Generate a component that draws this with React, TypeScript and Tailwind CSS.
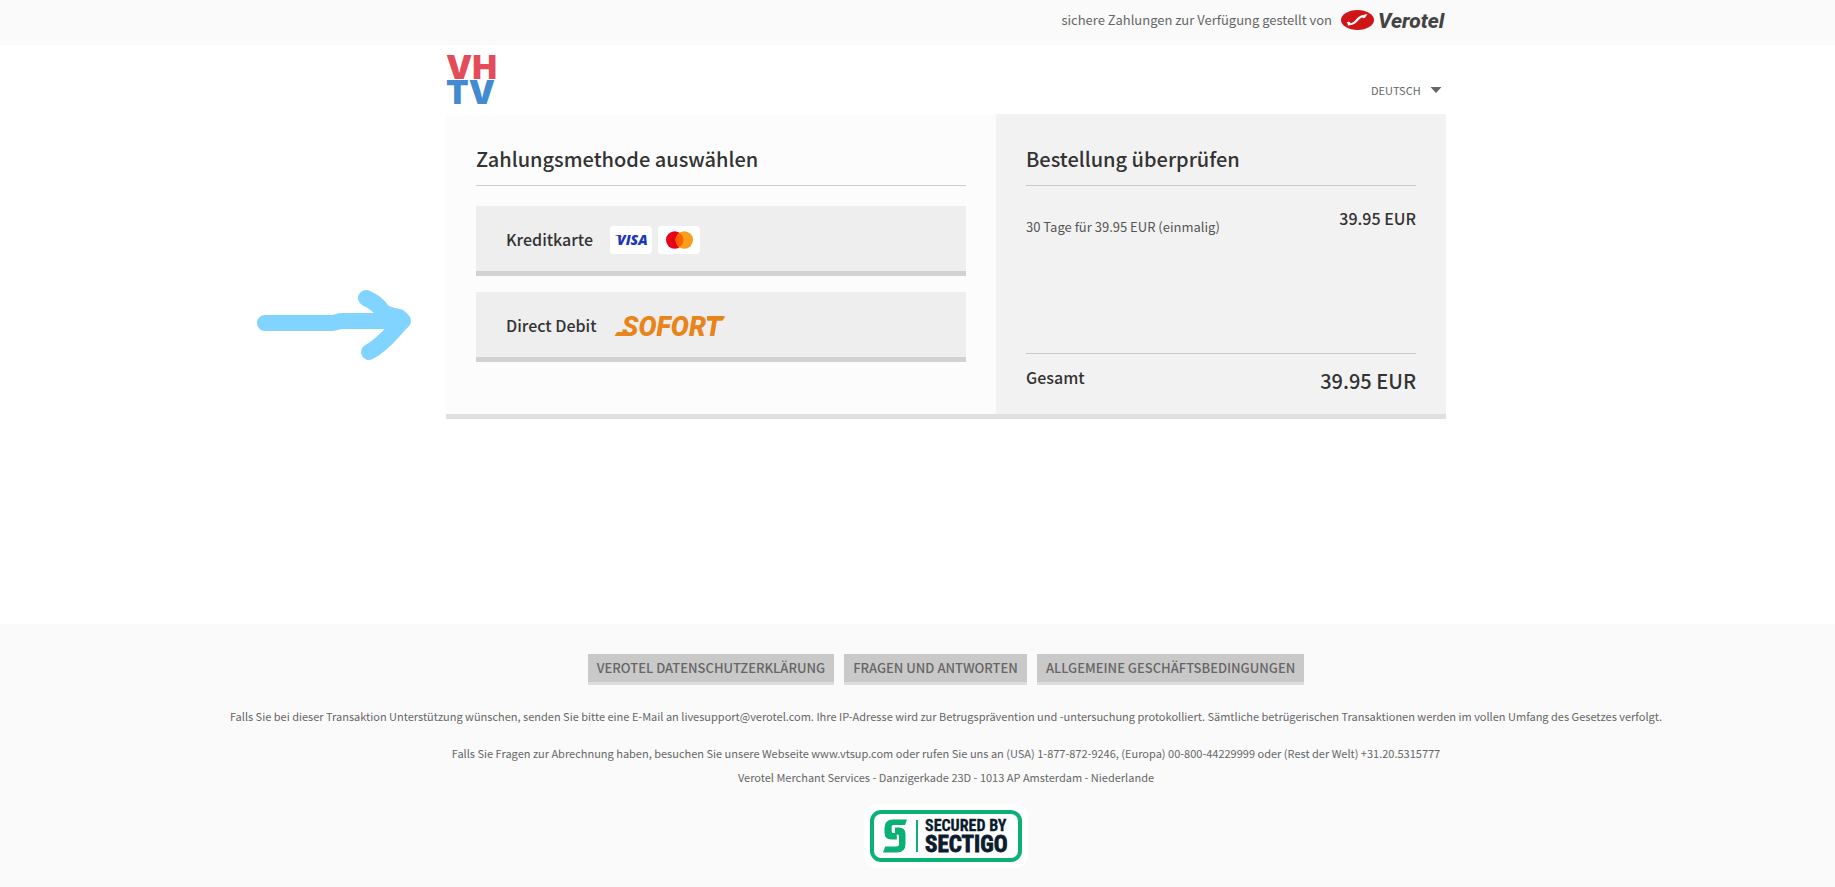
import { useState } from 'react';

const footerLinks = [
  { label: 'Verotel Datenschutzerklärung', href: '#privacy' },
  { label: 'Fragen und Antworten', href: '#faq' },
  { label: 'Allgemeine Geschäftsbedingungen', href: '#terms' },
];

const languages = ['Deutsch', 'English', 'Français', 'Español'];

function VerotelLogo() {
  return (
    <svg className="overflow-visible" width="106" height="24" viewBox="0 0 106 24" role="img" aria-label="Verotel">
      <ellipse cx="17.500" cy="12" rx="16.500" ry="10" fill="#cf1517" />
      <path
        d="M6.500 14.500c1.800-1.200 3.400-.8 4.300 1 2.600-.8 4.200-3 6.200-5.200 2.300-2.400 5.500-3.600 10.500-4.300-1.200 1.400-1.700 3.200-3 4-.9.500-1.700-.4-2.700-.5-2.600 1.300-4.200 4.200-6.800 5.900-2 1.300-4.500 2-7.300 2 .4-1.200-.1-2.200-1.200-2.900z"
        fill="#fff"
      />
      <text x="38" y="20" fontFamily="Roboto, sans-serif" fontSize="21" fontWeight="800" fontStyle="italic" fill="#444">
        Verotel
      </text>
    </svg>
  );
}

function VhtvLogo() {
  return (
    <svg
      className="overflow-visible"
      width="50"
      height="50"
      viewBox="0 0 50 50"
      role="img"
      aria-label="VHTV"
      fontFamily="Inter, sans-serif"
      fontSize="33"
      fontWeight="900"
    >
      <text x="0" y="25" fill="#e34d59">VH</text>
      <text x="0" y="50" fill="#428bd0">TV</text>
    </svg>
  );
}

function VisaCard() {
  return (
    <svg width="42" height="28" viewBox="0 0 42 28" role="img" aria-label="Visa">
      <rect width="42" height="28" rx="4" fill="#fff" />
      <path d="M5.500 9h5l1.500 2.500c-1.500-1.200-3.500-1.800-6.500-2z" fill="#1434cb" />
      <text x="7" y="19" fontFamily="'Open Sans', sans-serif" fontSize="14" fontWeight="800" fontStyle="italic" fill="#1a36c0">
        VISA
      </text>
    </svg>
  );
}

function MasterCard() {
  return (
    <svg width="42" height="28" viewBox="0 0 42 28" role="img" aria-label="Mastercard">
      <rect width="42" height="28" rx="4" fill="#fff" />
      <circle cx="16.700" cy="14" r="8.700" fill="#eb001b" />
      <circle cx="26.300" cy="14" r="8.700" fill="#f79e1b" />
      <path d="M21.500 6.740a8.700 8.700 0 0 1 0 14.520a8.700 8.700 0 0 1 0-14.520z" fill="#ff5f00" />
    </svg>
  );
}

function SofortLogo() {
  return (
    <svg className="overflow-visible" width="112" height="22" viewBox="0 0 112 22" role="img" aria-label="SOFORT">
      <path d="M3 17h12v4H0.500z" fill="#e8851a" />
      <path d="M93 1.300h18.500l-3.200 4.400h-15z" fill="#e8851a" />
      <text x="8" y="20.500" fontFamily="Roboto, sans-serif" fontSize="27" fontWeight="900" fontStyle="italic" fill="#e8851a">
        SOFORT
      </text>
    </svg>
  );
}

function SectigoSeal() {
  return (
    <svg width="164" height="64" viewBox="0 0 164 64" role="img" aria-label="Secured by Sectigo">
      <rect width="164" height="64" rx="12" fill="#fff" />
      <rect x="8" y="8" width="148" height="48" rx="9" fill="#fff" stroke="#0bb074" strokeWidth="4" />
      <g fill="#0bb074">
        <path d="M43 15.500l-2 5.500H29.500q-1.800 0-1.800 1.800V27.500q0 1.500 1.500 1.500H31v-5.500h4q6.500 0 6.500 6.500V40q0 8.500-8.500 8.500H19l2.200-6H32.500q2.500 0 2.500-2.500V32q0-1.500-1.500-1.500h-.7V35.500H27.500q-7 0-7-7V24q0-8.500 8.500-8.500z" />
        <rect x="52" y="16" width="2" height="32" />
      </g>
      <g fontFamily="'Liberation Sans Narrow', 'Roboto Condensed', Roboto, sans-serif" fontWeight="700" fill="#0b1c2c" stroke="#0b1c2c">
        <text x="61" y="27" fontSize="16" strokeWidth="0.300">SECURED BY</text>
        <text x="61" y="48" fontSize="23" strokeWidth="0.800">SECTIGO</text>
      </g>
    </svg>
  );
}

// hand-drawn pointer in the margin beside the payment methods
function Arrow() {
  return (
    <svg
      className="absolute top-[173px] -left-[190px]"
      width="160"
      height="80"
      viewBox="0 0 160 80"
      fill="none"
      stroke="#80d4ff"
      strokeWidth="16"
      strokeLinecap="round"
      strokeLinejoin="round"
      aria-hidden="true"
    >
      <path d="M9 36h66c5 0 6-2 12-2h56" />
      <path d="M110 11c8 4 13 7 17 14 5 2 8 4 16 5l4 4c-8 7-17 22-34 31" />
    </svg>
  );
}

export default function App() {
  const [language, setLanguage] = useState('Deutsch');

  return (
    <div className="flex min-h-screen flex-col bg-white font-['Noto_Sans_CJK_SC',sans-serif] text-[#666]">
      <div className="bg-[#fafafa] pl-[57px]">
        <div className="mx-auto flex h-[45px] max-w-[1000px] items-center justify-end gap-2 pb-[6px]">
          <span className="text-[13px] leading-5">sichere Zahlungen zur Verfügung gestellt von</span>
          <VerotelLogo />
        </div>
      </div>

      <div className="pl-[57px]">
        <div className="mx-auto max-w-[1000px]">
          <header className="flex items-end justify-between pt-[9px] pb-[10px]">
            <VhtvLogo />
            <div className="relative pb-[2px]">
              <select
                aria-label="Sprache"
                value={language}
                onChange={(e) => setLanguage(e.target.value)}
                className="block appearance-none pr-[23px] text-[11px] leading-6 uppercase"
              >
                {languages.map((l) => (
                  <option key={l}>{l}</option>
                ))}
              </select>
              <svg className="pointer-events-none absolute top-[9px] right-1" width="12" height="6" viewBox="0 0 12 6" aria-hidden="true">
                <path d="M0.500 0h11L6 6z" fill="#666" />
              </svg>
            </div>
          </header>

          <main className="relative flex border-b-[5px] border-[#e0e0e0] text-[#333]">
            <Arrow />
            <section className="w-[55%] bg-[#fcfcfc] px-[30px] pt-[29px] pb-[52px]">
              <h1 className="border-b border-[#ccc] pb-[11px] text-[20px] leading-[31px] font-medium">Zahlungsmethode auswählen</h1>
              <div className="mt-5 flex flex-col gap-4">
                <button className="flex h-[70px] items-center gap-[17px] border-b-[5px] border-[#d2d2d2] bg-[#eee] px-[30px]">
                  <span className="text-[16px] leading-6 font-medium">Kreditkarte</span>
                  <span className="flex gap-[6px] pt-[2px]">
                    <VisaCard />
                    <MasterCard />
                  </span>
                </button>
                <button className="flex h-[70px] items-center gap-[17px] border-b-[5px] border-[#d2d2d2] bg-[#eee] px-[30px]">
                  <span className="text-[16px] leading-6 font-medium">Direct Debit</span>
                  <span className="pt-[2px]">
                    <SofortLogo />
                  </span>
                </button>
              </div>
            </section>

            <section className="flex w-[45%] flex-col bg-[#f2f2f2] px-[30px] pt-[29px] pb-[17px]">
              <h2 className="border-b border-[#ccc] pb-[11px] text-[20px] leading-[31px] font-medium">Bestellung überprüfen</h2>
              <div className="mt-5 flex items-start justify-between">
                <p className="pt-[11px] text-[13px] leading-5 text-[#555]">30 Tage für 39.95 EUR (einmalig)</p>
                <p className="text-[16px] leading-6 font-medium">39.95 EUR</p>
              </div>
              <div className="mt-auto flex items-start justify-between border-t border-[#ccc] pt-[11px]">
                <p className="text-[16px] leading-6 font-medium">Gesamt</p>
                <p className="text-[20px] leading-8 font-medium">39.95 EUR</p>
              </div>
            </section>
          </main>
        </div>
      </div>

      <footer className="mt-[205px] flex-1 bg-[#fafafa] pt-[30px] pb-4 pl-[57px] text-center text-[11px]">
        <nav className="flex justify-center gap-[10px]">
          {footerLinks.map((link) => (
            <a
              key={link.href}
              href={link.href}
              className="border-b-[3px] border-[#ddd] bg-[#c9c9c9] px-[9px] text-[13px] leading-7 font-medium uppercase"
            >
              {link.label}
            </a>
          ))}
        </nav>
        <p className="mt-[19px] leading-6">
          Falls Sie bei dieser Transaktion Unterstützung wünschen, senden Sie bitte eine E-Mail an livesupport@verotel.com. Ihre IP-Adresse wird zur
          Betrugsprävention und -untersuchung protokolliert. Sämtliche betrügerischen Transaktionen werden im vollen Umfang des Gesetzes verfolgt.
        </p>
        <p className="mt-[13px] leading-6">
          Falls Sie Fragen zur Abrechnung haben, besuchen Sie unsere Webseite www.vtsup.com oder rufen Sie uns an (USA) 1-877-872-9246, (Europa)
          00-800-44229999 oder (Rest der Welt) +31.20.5315777
        </p>
        <p className="leading-6">Verotel Merchant Services - Danzigerkade 23D - 1013 AP Amsterdam - Niederlande</p>
        <div className="mt-[15px] flex justify-center">
          <SectigoSeal />
        </div>
      </footer>
    </div>
  );
}
